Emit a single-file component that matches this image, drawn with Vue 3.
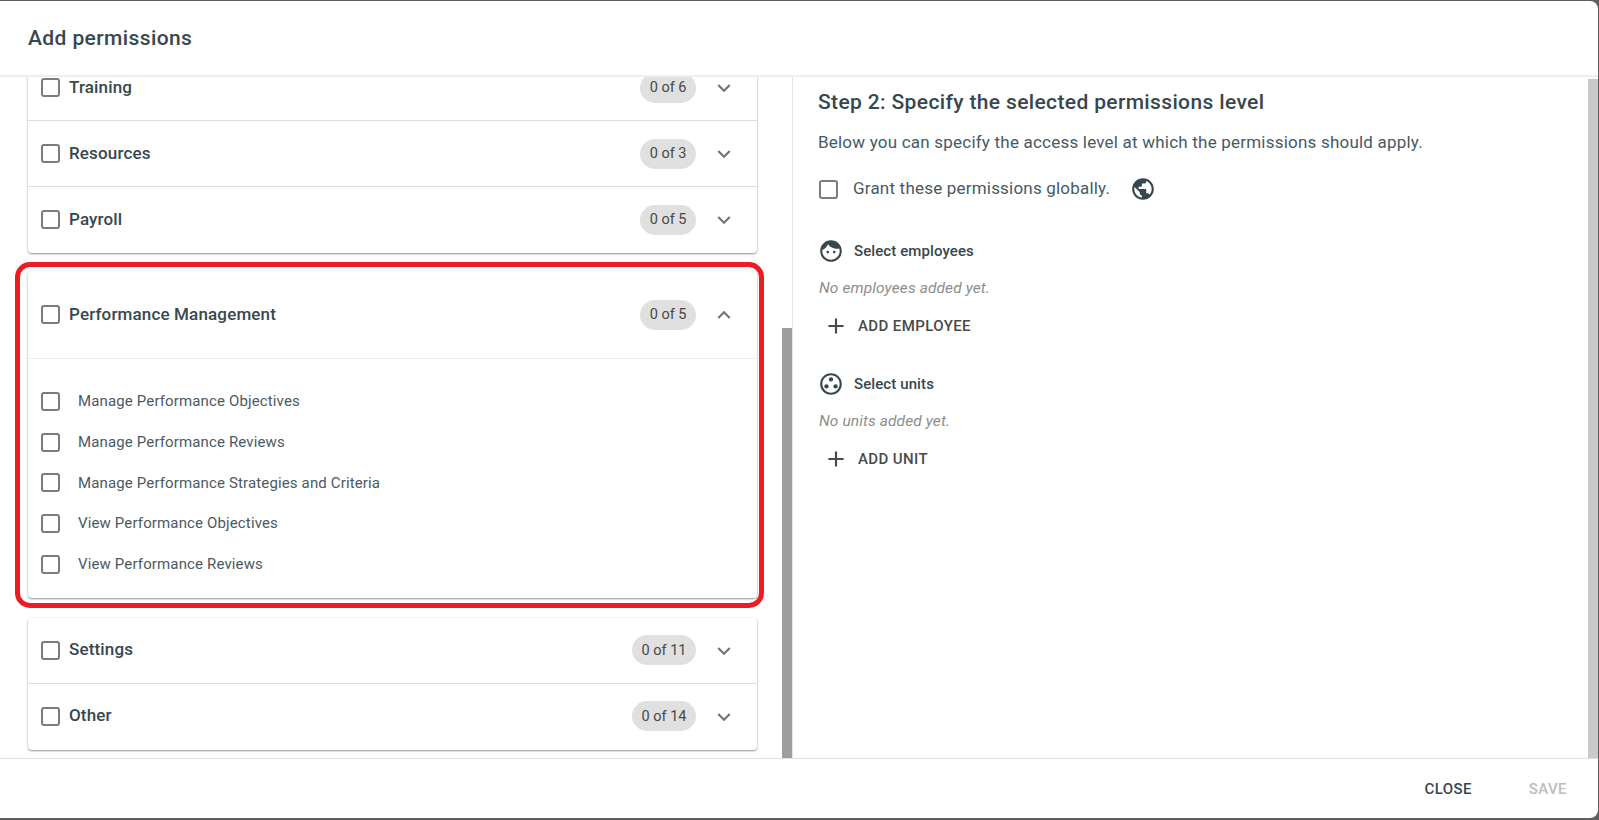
<script setup>
const topGroups = [
  { name: 'Training', count: '0 of 6' },
  { name: 'Resources', count: '0 of 3' },
  { name: 'Payroll', count: '0 of 5' },
]
const items = [
  'Manage Performance Objectives',
  'Manage Performance Reviews',
  'Manage Performance Strategies and Criteria',
  'View Performance Objectives',
  'View Performance Reviews',
]
const bottomGroups = [
  { name: 'Settings', count: '0 of 11' },
  { name: 'Other', count: '0 of 14' },
]
</script>

<template>
  <div class="backdrop">
    <section class="dialog">
      <header class="head">Add permissions</header>
      <div class="body">
        <div class="left">
          <div class="list">
            <div class="card">
              <div v-for="g in topGroups" :key="g.name" class="row">
                <span class="cb"></span>
                <span class="name">{{ g.name }}</span>
                <span class="chip">{{ g.count }}</span>
                <svg class="chev" viewBox="0 0 24 24"><path d="M7.41 8.59 12 13.17l4.59-4.58L18 10l-6 6-6-6z" /></svg>
              </div>
            </div>
            <div class="card open">
              <div class="row head-row">
                <span class="cb"></span>
                <span class="name">Performance Management</span>
                <span class="chip">0 of 5</span>
                <svg class="chev" viewBox="0 0 24 24"><path d="M12 8l-6 6 1.41 1.41L12 10.83l4.59 4.58L18 14z" /></svg>
              </div>
              <div class="sub">
                <div v-for="i in items" :key="i" class="item">
                  <span class="cb"></span>
                  <span class="item-name">{{ i }}</span>
                </div>
              </div>
              <div class="marker"></div>
            </div>
            <div class="card">
              <div v-for="g in bottomGroups" :key="g.name" class="row">
                <span class="cb"></span>
                <span class="name">{{ g.name }}</span>
                <span class="chip">{{ g.count }}</span>
                <svg class="chev" viewBox="0 0 24 24"><path d="M7.41 8.59 12 13.17l4.59-4.58L18 10l-6 6-6-6z" /></svg>
              </div>
            </div>
          </div>
          <div class="thumb left-thumb"></div>
        </div>
        <div class="right">
          <h2 class="step">Step 2: Specify the selected permissions level</h2>
          <p class="desc">Below you can specify the access level at which the permissions should apply.</p>
          <div class="global">
            <span class="cb"></span>
            <span class="global-text">Grant these permissions globally.</span>
            <svg class="globe" viewBox="0 0 24 24"><path d="M12 2C6.48 2 2 6.48 2 12s4.48 10 10 10 10-4.48 10-10S17.52 2 12 2zm-1 17.93c-3.95-.49-7-3.85-7-7.93 0-.62.08-1.21.21-1.79L9 15v1c0 1.1.9 2 2 2v1.93zm6.9-2.54c-.26-.81-1-1.39-1.9-1.39h-1v-3c0-.55-.45-1-1-1H8v-2h2c.55 0 1-.45 1-1V7h2c1.1 0 2-.9 2-2v-.41c2.93 1.19 5 4.06 5 7.41 0 2.08-.8 3.97-2.1 5.39z" /></svg>
          </div>
          <div class="section first">
            <svg class="sec-icon" viewBox="0 0 24 24"><path d="M9 11.75a1.25 1.25 0 1 0 0 2.5 1.25 1.25 0 0 0 0-2.5zm6 0a1.25 1.25 0 1 0 0 2.5 1.25 1.25 0 0 0 0-2.5zM12 2C6.48 2 2 6.48 2 12s4.48 10 10 10 10-4.48 10-10S17.52 2 12 2zm0 18c-4.41 0-8-3.59-8-8 0-.29.02-.58.05-.86 2.36-1.05 4.23-2.98 5.21-5.37C11.07 8.33 14.05 10 17.42 10c.78 0 1.53-.09 2.25-.26.21.71.33 1.47.33 2.26 0 4.41-3.59 8-8 8z" /></svg>
            <span>Select employees</span>
          </div>
          <p class="none">No employees added yet.</p>
          <div class="add">
            <svg class="plus" viewBox="0 0 24 24"><path d="M19 13h-6v6h-2v-6H5v-2h6V5h2v6h6v2z" /></svg>
            <span class="add-label">ADD EMPLOYEE</span>
          </div>
          <div class="section">
            <svg class="sec-icon" viewBox="0 0 24 24"><path d="M12 2C6.48 2 2 6.48 2 12s4.48 10 10 10 10-4.48 10-10S17.52 2 12 2zm0 18c-4.41 0-8-3.59-8-8s3.59-8 8-8 8 3.59 8 8-3.59 8-8 8z" /><circle cx="12" cy="7.8" r="2" /><circle cx="7.8" cy="14.2" r="2" /><circle cx="16.2" cy="14.2" r="2" /></svg>
            <span>Select units</span>
          </div>
          <p class="none">No units added yet.</p>
          <div class="add">
            <svg class="plus" viewBox="0 0 24 24"><path d="M19 13h-6v6h-2v-6H5v-2h6V5h2v6h6v2z" /></svg>
            <span class="add-label">ADD UNIT</span>
          </div>
          <div class="thumb right-thumb"></div>
        </div>
      </div>
      <footer class="foot">
        <span class="btn">CLOSE</span>
        <span class="btn off">SAVE</span>
      </footer>
    </section>
  </div>
</template>

<style scoped>
.backdrop {
  height: 820px;
  background: #5f5f5f;
  padding: 1px 1px 2px 0;
  box-sizing: border-box;
  font-family: Roboto, sans-serif;
  color: #37474f;
  overflow: hidden;
}
.dialog {
  height: 100%;
  background: #fff;
  border-radius: 0 8px 8px 0;
  display: flex;
  flex-direction: column;
  overflow: hidden;
}
.head {
  height: 76px;
  flex: none;
  box-sizing: border-box;
  padding: 0 28px;
  display: flex;
  align-items: center;
  font-size: 21px;
  font-weight: 500;
  letter-spacing: 0.4px;
  border-bottom: 2px solid #eee;
}
.body {
  flex: 1;
  min-height: 0;
  display: flex;
}
.left {
  width: 792px;
  flex: none;
  position: relative;
  overflow: hidden;
}
.list {
  margin-top: -22px;
  padding: 0 35px 0 28px;
}
.card {
  background: #fff;
  border-radius: 4px;
  box-shadow: 0 1px 2px rgba(0, 0, 0, .42), 0 0 3px rgba(0, 0, 0, .06);
  margin-bottom: 18px;
  position: relative;
}
.card.open {
  margin-bottom: 20px;
}
.row {
  height: 66px;
  box-sizing: border-box;
  display: flex;
  align-items: center;
  padding: 0 13px;
  border-bottom: 1px solid #dcdcdc;
}
.row:last-child { border-bottom-color: transparent; }
.head-row {
  height: 88px;
  border-bottom: 1px solid #eee;
}
.head-row:last-child { border-bottom: 1px solid #eee; }
.cb {
  width: 19px;
  height: 19px;
  box-sizing: border-box;
  border: 2px solid #7c7c7c;
  border-radius: 3px;
  flex: none;
}
.name {
  margin-left: 9px;
  padding-bottom: 2px;
  font-size: 17px;
  font-weight: 500;
  letter-spacing: 0.15px;
  flex: 1;
}
.chip {
  height: 30px;
  padding: 0 9.5px;
  border-radius: 15px;
  background: #e0e0e0;
  color: #484848;
  font-size: 14.5px;
  display: flex;
  align-items: center;
  justify-content: center;
}
.chev {
  width: 26px;
  height: 26px;
  margin: 1px 7px 0 15px;
  fill: #757575;
  flex: none;
}
.sub {
  padding: 22px 13px 13.5px;
}
.item {
  height: 40.7px;
  display: flex;
  align-items: center;
}
.item-name {
  margin-left: 18px;
  font-size: 15px;
  letter-spacing: 0.14px;
  color: #4b5a62;
}
.marker {
  position: absolute;
  left: -13px;
  right: -7px;
  top: -9px;
  bottom: -10px;
  border: 5px solid #ed1c24;
  border-radius: 15px;
  pointer-events: none;
}
.thumb {
  position: absolute;
  width: 10px;
}
.left-thumb {
  right: 0;
  top: 251px;
  bottom: 0;
  background: #9e9e9e;
}
.right {
  flex: 1;
  position: relative;
  border-left: 1px solid #e4e4e4;
  padding: 0 25px;
  overflow: hidden;
}
.right-thumb {
  right: 0;
  top: 2px;
  bottom: 0;
  background: #c9c9c9;
}
.step {
  margin: 13px 0 0;
  font-size: 21px;
  line-height: 24px;
  font-weight: 500;
  letter-spacing: 0.36px;
}
.desc {
  margin: 16px 0 0;
  font-size: 17px;
  line-height: 24px;
  color: #455a64;
  letter-spacing: 0.21px;
}
.global {
  display: flex;
  align-items: center;
  margin-top: 23px;
  height: 24px;
}
.global .cb { margin-left: 1px; }
.global-text {
  margin-left: 15px;
  padding-bottom: 2px;
  font-size: 17px;
  color: #455a64;
  letter-spacing: 0.2px;
}
.globe {
  width: 26px;
  height: 26px;
  margin-left: 20px;
  fill: #37474f;
}
.section {
  display: flex;
  align-items: center;
  height: 24px;
  margin-top: 28px;
  font-size: 15px;
  font-weight: 500;
  letter-spacing: 0.1px;
}
.section.first { margin-top: 38px; }
.sec-icon {
  width: 26px;
  height: 26px;
  margin-right: 10px;
  fill: #37474f;
  flex: none;
}
.none {
  margin: 15px 0 0 1px;
  font-size: 15.5px;
  line-height: 20px;
  font-style: italic;
  letter-spacing: 0.1px;
  color: #8d8d8d;
}
.add {
  display: flex;
  align-items: center;
  height: 36px;
  margin-top: 10px;
  padding-left: 5px;
  font-size: 15px;
  font-weight: 500;
  letter-spacing: 0.4px;
  color: #4a4a4a;
}
.add-label { padding-bottom: 1px; }
.plus {
  width: 26px;
  height: 26px;
  margin-right: 9px;
  fill: #4a4a4a;
}
.foot {
  height: 60px;
  flex: none;
  box-sizing: border-box;
  border-top: 1px solid #e0e0e0;
  display: flex;
  align-items: center;
  justify-content: flex-end;
  gap: 57px;
  padding-right: 31px;
}
.btn {
  font-size: 15px;
  font-weight: 500;
  letter-spacing: 0.4px;
}
.off { color: #bdbdbd; }
</style>

<style>
html, body { margin: 0; overflow: hidden; }
</style>
